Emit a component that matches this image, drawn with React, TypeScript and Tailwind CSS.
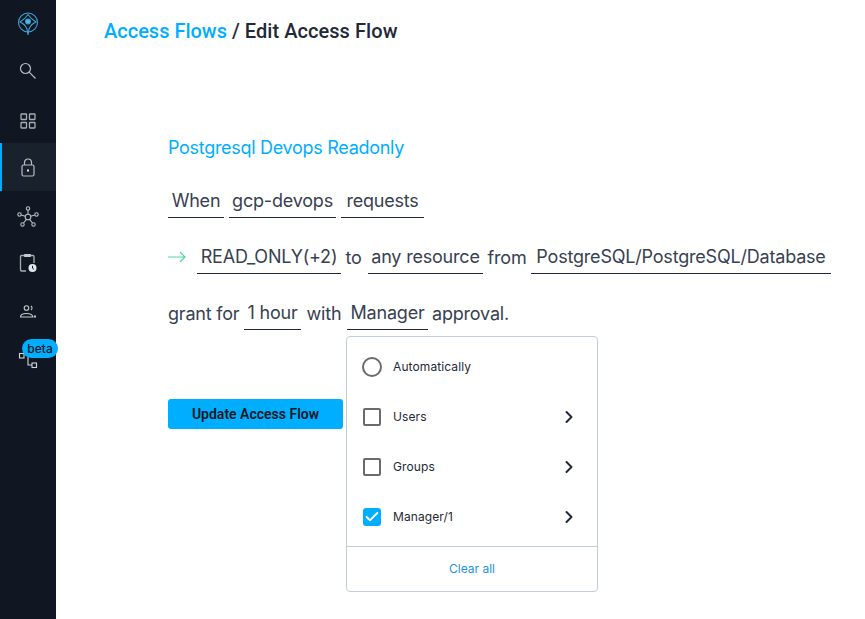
import { ChevronRight, Check } from "lucide-react";

function Chip({ text, w }: { text: string; w: string }) {
  return (
    <span className={`flex h-[33px] items-center justify-center whitespace-nowrap border-b border-[#1f2937] text-center text-[18px] tracking-[-0.2px] text-[#374151] ${w}`}>
      {text}
    </span>
  );
}

function Word({ text, w }: { text: string; w: string }) {
  return <span className={`whitespace-nowrap text-[18px] tracking-[-0.2px] text-[#374151] ${w}`}>{text}</span>;
}

function Row({ box, label, chevron }: { box: React.ReactNode; label: string; chevron?: boolean }) {
  return (
    <div className="flex h-[50px] items-center pl-[15px] pr-[18px]">
      <span className="flex w-[31px] shrink-0">{box}</span>
      <span className="flex-1 text-[12px] font-normal tracking-[0.1px] text-[#1f2937]">{label}</span>
      {chevron && <ChevronRight size={20} strokeWidth={2.4} className="text-[#1f2937]" />}
    </div>
  );
}

const emptyBox = <span className="ml-[1px] h-[18px] w-[18px] rounded-[2px] border-2 border-[#6b6b6b]" />;

function Sidebar() {
  return (
    <aside className="flex h-[619px] w-[56px] shrink-0 flex-col items-center bg-[#111722]">
      <div className="flex h-[47px] w-full items-center justify-center">
        <svg width="22" height="24" viewBox="0 0 22 24" fill="none" stroke="#3f9fd0" strokeWidth="1.1">
          <circle cx="11" cy="10.5" r="9.5" />
          <path d="M11 2.5 Q14 7 19 10 Q14 12 12 17 L11 23 L10 17 Q8 12 3 10 Q8 7 11 2.5 Z" />
          <circle cx="11" cy="9.5" r="2.4" fill="#5ab4e0" />
        </svg>
      </div>
      <div className="flex h-[48px] w-full items-center justify-center">
        <svg width="18" height="18" viewBox="0 0 18 18" fill="none" stroke="#b8bcc2" strokeWidth="1.2" className="ml-[-1px]">
          <circle cx="6.5" cy="6.5" r="5" />
          <path d="M10.2 10.2 L16.5 16.5" />
        </svg>
      </div>
      <div className="flex h-[48px] w-full items-center justify-center pt-[4px]">
        <svg width="16" height="16" viewBox="0 0 16 16" fill="none" stroke="#a9adb3" strokeWidth="1.3">
          <rect x="1" y="1" width="5.5" height="5.5" rx="0.5" />
          <rect x="9.5" y="1" width="5.5" height="5.5" rx="0.5" />
          <rect x="1" y="9.5" width="5.5" height="5.5" rx="0.5" />
          <rect x="9.5" y="9.5" width="5.5" height="5.5" rx="0.5" />
        </svg>
      </div>
      <div className="flex h-[48px] w-full items-center justify-center border-l-2 border-[#00aeff] bg-[#19212c] pr-[2px]">
        <svg width="14" height="19" viewBox="0 0 14 19" fill="none" stroke="#b8bcc2" strokeWidth="1.2">
          <rect x="1" y="7" width="12" height="11" rx="1.5" />
          <path d="M3.5 7 V4.5 a3.5 3.5 0 0 1 7 0 V7" />
          <rect x="6" y="11.5" width="2" height="2" fill="#e5e7eb" stroke="none" />
        </svg>
      </div>
      <div className="flex h-[48px] w-full items-center justify-center pt-[4px]">
        <svg width="22" height="22" viewBox="0 0 22 22" fill="none" stroke="#b8bcc2" strokeWidth="1.1">
          <circle cx="11" cy="11" r="2.8" />
          <circle cx="11" cy="2.5" r="1.7" />
          <circle cx="2.5" cy="8.5" r="1.7" />
          <circle cx="19.5" cy="8.5" r="1.7" />
          <circle cx="5.5" cy="18.5" r="1.7" />
          <circle cx="16.5" cy="18.5" r="1.7" />
          <path d="M11 4.2 V8.2 M4.2 8.9 L8.3 10.2 M17.8 8.9 L13.7 10.2 M6.5 17 L9.4 13.3 M15.5 17 L12.6 13.3" />
        </svg>
      </div>
      <div className="flex h-[48px] w-full items-center justify-center">
        <svg width="18" height="20" viewBox="0 0 18 20" fill="none">
          <path d="M7 18 H2.5 a1 1 0 0 1 -1 -1 V3.5 a1 1 0 0 1 1 -1 H14 a1 1 0 0 1 1 1 V10" stroke="#a9adb3" strokeWidth="1.3" />
          <rect x="5" y="1" width="7" height="3" rx="0.8" fill="#c4c7cb" />
          <circle cx="13.5" cy="15" r="4" fill="#e5e7eb" />
          <path d="M13.5 12.8 V15.2 L15 16.4" stroke="#111827" strokeWidth="1" />
        </svg>
      </div>
      <div className="flex h-[48px] w-full items-center justify-center pt-[2px]">
        <svg width="18" height="14" viewBox="0 0 18 14" fill="none" stroke="#c4c7cb" strokeWidth="1.1">
          <circle cx="7.5" cy="3" r="2.3" />
          <path d="M12 1 a2.5 2.5 0 0 1 0 4" />
          <path d="M1.5 12 C1.5 9.5 4.5 8.5 7.5 8.5 C10.5 8.5 13.5 9.5 14 12 Z" />
          <path d="M16 10.5 V12.5" strokeWidth="2" />
        </svg>
      </div>
      <div className="relative flex h-[48px] w-full items-center justify-center">
        <svg width="20" height="20" viewBox="0 0 20 20" fill="none" stroke="#d1d5db" strokeWidth="1.1" className="ml-[-1px] mt-[1px]">
          <rect x="1.5" y="3.5" width="4.5" height="4.5" />
          <rect x="14" y="13" width="4.5" height="4.5" />
          <path d="M10 4 V15 H14" />
        </svg>
        <span className="absolute left-[22px] top-[4px] flex h-[19px] w-[36px] items-center justify-center rounded-full bg-[#00aeff] text-[12px] font-medium text-[#0f1722]">
          beta
        </span>
      </div>
    </aside>
  );
}

export default function App() {
  return (
    <div className="flex h-[619px] w-[865px] overflow-hidden bg-white" style={{ fontFamily: '"Inter", sans-serif' }}>
      <Sidebar />
      <main className="min-w-0 flex-1">
        <h1 className="ml-[48px] mt-[19px] text-[20px] font-medium leading-[24px] text-[#1f2937]" style={{ fontFamily: "Roboto, sans-serif" }}>
          <span className="text-[#00aeff]">Access Flows</span> / <span className="tracking-[0.06px]">Edit Access Flow</span>
        </h1>
        <div className="ml-[112px] mt-[93px]">
          <div className="text-[18px] leading-[24px] tracking-[-0.3px] text-[#00aeff]">Postgresql Devops Readonly</div>
          <div className="mt-[21px] flex h-[40px] items-center gap-[5px]">
            <Chip text="When" w="w-[56px]" />
            <Chip text="gcp-devops" w="w-[107px]" />
            <Chip text="requests" w="w-[83px]" />
          </div>
          <div className="mt-[16px] flex h-[40px] items-center">
            <svg width="18" height="12" viewBox="0 0 18 12" fill="none" stroke="#4fd8ab" strokeWidth="1.2" className="mr-[11px]">
              <path d="M0 6 H17 M12 1 L17 6 L12 11" />
            </svg>
            <Chip text="READ_ONLY(+2)" w="w-[144px]" />
            <Word text="to" w="w-[27px] pr-[2px] text-center" />
            <Chip text="any resource" w="w-[115px]" />
            <Word text="from" w="w-[48px] text-center" />
            <Chip text="PostgreSQL/PostgreSQL/Database" w="w-[300px]" />
          </div>
          <div className="mt-[16px] flex h-[40px] items-center">
            <Word text="grant for" w="w-[76px]" />
            <Chip text="1 hour" w="w-[57px]" />
            <Word text="with" w="w-[46px] text-center" />
            <Chip text="Manager" w="w-[81px]" />
            <Word text="approval." w="ml-[4px]" />
          </div>
          <div className="mt-[3px] flex items-start">
            <button className="mt-[63px] flex h-[30px] w-[175px] items-center justify-center rounded-[3px] bg-[#00aeff] text-[14px] font-semibold text-[#0f1722]" style={{ fontFamily: "Roboto, sans-serif" }}>
              Update Access Flow
            </button>
            <div className="ml-[3px] h-[256px] w-[252px] rounded-[4px] border border-[#c3ccd9] bg-white">
              <div className="h-[209px] pt-[5px]">
                <Row label="Automatically" box={<span className="h-[20px] w-[20px] rounded-full border-2 border-[#6b6b6b]" />} />
                <Row label="Users" box={emptyBox} chevron />
                <Row label="Groups" box={emptyBox} chevron />
                <Row
                  label="Manager/1"
                  chevron
                  box={
                    <span className="ml-[1px] flex h-[18px] w-[18px] items-center justify-center rounded-[3px] bg-[#00aeff]">
                      <Check size={16} strokeWidth={3} className="text-white" />
                    </span>
                  }
                />
              </div>
              <div className="flex h-[45px] items-center justify-center border-t border-[#c3ccd9] text-[12px] font-normal text-[#1a96e0]">
                Clear all
              </div>
            </div>
          </div>
        </div>
      </main>
    </div>
  );
}
